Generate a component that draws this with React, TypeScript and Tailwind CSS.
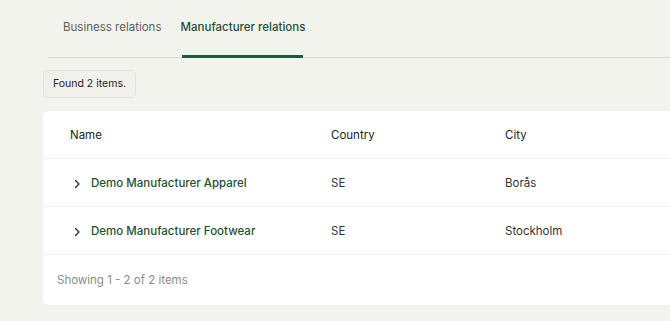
import React from "react";

const rows = [
  { name: "Demo Manufacturer Apparel", country: "SE", city: "Borås" },
  { name: "Demo Manufacturer Footwear", country: "SE", city: "Stockholm" },
];

function Chevron() {
  return (
    <svg width="8" height="10" viewBox="0 0 8 10" fill="none" className="shrink-0">
      <path d="M2.5 1.5 L6 5 L2.5 8.5" stroke="#333" strokeWidth="1.4" strokeLinecap="round" strokeLinejoin="round" />
    </svg>
  );
}

export default function App() {
  return (
    <div
      className="w-[670px] h-[321px] overflow-hidden bg-[#f3f3ee] text-[11.5px]"
      style={{ fontFamily: "Inter, 'Noto Sans', sans-serif" }}
    >
      <div className="pl-[48px] pt-[17px]">
        <div className="flex border-b border-[#d6d6d2] h-[41px] whitespace-nowrap">
          <div className="pl-[15px] pr-[21px] flex items-start pt-[2px] text-[#5b5f5c]">Business relations</div>
          <div className="flex items-start justify-center pt-[2px] text-[#1f4f35] font-medium border-b-[3px] border-[#1f5c3d] w-[121px] mb-[-1px] h-[41px]">
            Manufacturer relations
          </div>
        </div>
      </div>
      <div className="pl-[43px] pt-[12px]">
        <div className="inline-flex items-center h-[28px] px-[9px] rounded-[5px] border border-[#e2e2dd] bg-[#f1f1ec] text-[#222] text-[10.5px]">
          Found 2 items.
        </div>
      </div>
      <div className="ml-[43px] mt-[13px] bg-white rounded-l-[6px] w-[640px]">
        <div className="grid grid-cols-[288px_174px_1fr] h-[48px] items-center border-b border-[#efefeb] text-[#222] pt-[2px]">
          <div className="pl-[27px]">Name</div>
          <div>Country</div>
          <div>City</div>
        </div>
        {rows.map((r) => (
          <div
            key={r.name}
            className="grid grid-cols-[288px_174px_1fr] h-[48px] items-center border-b border-[#efefeb] pt-[2px]"
          >
            <div className="pl-[30px] flex items-center gap-[10px] text-[#1f4f35] font-medium">
              <Chevron />
              <span>{r.name}</span>
            </div>
            <div className="text-[#333]">{r.country}</div>
            <div className="text-[#333]">{r.city}</div>
          </div>
        ))}
        <div className="h-[50px] flex items-center pl-[14px] pt-[1px] text-[#8a8c89]">Showing 1 - 2 of 2 items</div>
      </div>
    </div>
  );
}
